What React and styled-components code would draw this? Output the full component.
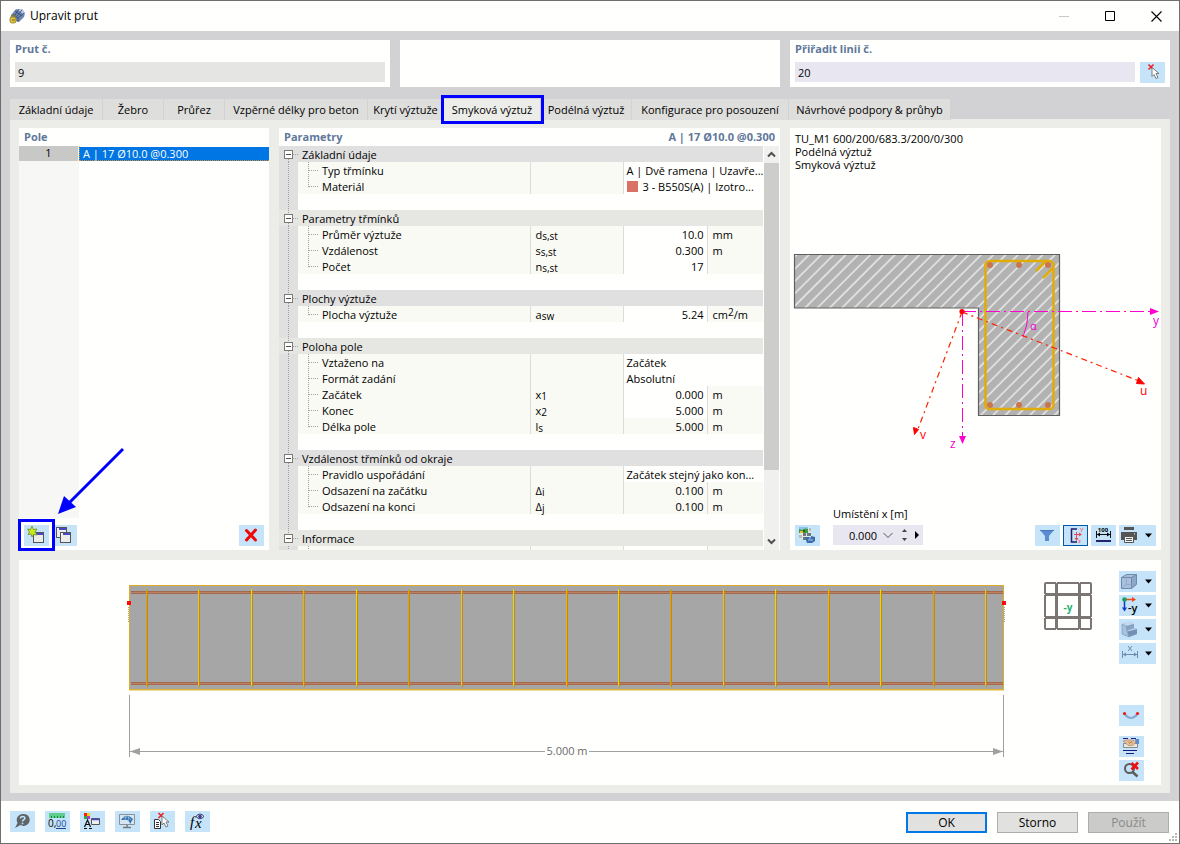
import { useState } from "react";
import styled, { createGlobalStyle } from "styled-components";

const GlobalStyle = createGlobalStyle`
  * {
    box-sizing: border-box;
  }
  body {
    margin: 0;
    background: #fffffd;
    color: #000;
    font: 11px/16px "Open Sans", "Noto Sans", sans-serif;
  }
  button, input, select {
    font: inherit;
    color: inherit;
    border: 0;
    margin: 0;
    padding: 0;
    border-radius: 0;
    background: none;
  }
  svg {
    display: block;
  }
`;

const Window = styled.div`
  display: flex;
  flex-direction: column;
  height: 100vh;
  min-height: 640px;
  border: 1px solid #6e6e6e;
  background: #fffffd;
`;

const TitleBar = styled.header`
  display: flex;
  align-items: center;
  height: 30px;
  padding: 0 0 0 8px;
  flex: none;
`;

const WindowTitle = styled.h1`
  flex: 1;
  margin: 0 0 0 5px;
  font-size: 12px;
  font-weight: 400;
`;

const CaptionButton = styled.button`
  width: 46px;
  height: 28px;
  display: grid;
  place-items: center;
  color: ${(p) => (p.disabled ? "#c8c8c4" : "#000")};
`;

const Body = styled.main`
  flex: 1;
  min-height: 0;
  display: flex;
  flex-direction: column;
  padding: 9px 9px 8px;
  background: #d2d2d4;
`;

const HeaderRow = styled.div`
  display: grid;
  grid-template-columns: repeat(3, 1fr);
  gap: 10px;
  flex: none;
`;

const HeaderBox = styled.div`
  height: 47px;
  padding: 0 5px 5px;
  background: #fffffd;
`;

const Caption = styled.label`
  display: block;
  height: 22px;
  line-height: 18px;
  font-weight: 700;
  color: #60779b;
`;

const FieldRow = styled.div`
  display: flex;
  gap: 5px;
`;

const Field = styled.input`
  flex: 1;
  min-width: 0;
  height: 20px;
  padding: 1px 3px 0;
  background: ${(p) => (p.readOnly ? "#e5e5e3" : "#e8e7f1")};
`;

const Tabs = styled.div`
  display: flex;
  flex: none;
  margin-top: 12px;
`;

const Tab = styled.button`
  position: relative;
  z-index: ${(p) => (p["aria-selected"] ? 2 : 1)};
  height: 21px;
  width: ${(p) => p.$width}px;
  padding-top: 1px;
  white-space: nowrap;
  background: ${(p) => (p["aria-selected"] ? "#ecede9" : "#dededc")};
  border-right: 1px solid #d2d2d4;
`;

const Marker = styled.span`
  position: absolute;
  z-index: 2;
  inset: ${(p) => p.$inset};
  border: 3px solid #0000ff;
  pointer-events: none;
`;

const Pane = styled.section`
  flex: 1;
  min-height: 0;
  display: grid;
  grid-template-columns: 250fr 501fr 371fr;
  grid-template-rows: minmax(0, 1fr) 225px;
  gap: 10px;
  margin-top: -1px;
  padding: 9px 9px 8px;
  background: #ecede9;
`;

const Panel = styled.section`
  display: flex;
  flex-direction: column;
  min-width: 0;
  min-height: 0;
  position: relative;
  background: #fffffd;
`;

const PanelHead = styled.h2`
  display: flex;
  justify-content: space-between;
  flex: none;
  height: 18px;
  margin: 0;
  padding: 0 5px;
  font-size: 11px;
  line-height: 18px;
  color: #60779b;
`;

const FieldList = styled.div`
  flex: 1;
  background: linear-gradient(to right, #f7f8f6 60px, #fffffd 60px);
`;

const FieldItem = styled.button`
  display: grid;
  grid-template-columns: 59px 1fr;
  gap: 1px;
  width: 100%;
  height: 15px;
  line-height: 14px;
  text-align: left;
`;

const ItemNo = styled.span`
  background: #c8c9c6;
  text-align: center;
`;

const ItemText = styled.span`
  padding-left: 3px;
  color: #fff;
  height: 15px;
  background: #0075e4;
  border: 1px dotted #e08a30;
  border-width: 0 0 1px 1px;
  border-top: 1px solid #fffffd;
`;

const ListTools = styled.div`
  display: flex;
  gap: 3px;
  padding: 7px 5px 4px;
`;

const ToolButton = styled.button`
  position: relative;
  display: flex;
  align-items: center;
  justify-content: ${(p) => (p.$menu ? "space-between" : "center")};
  flex: none;
  width: ${(p) => (p.$menu ? 37 : 25)}px;
  height: 21px;
  padding: ${(p) => (p.$menu ? "0 4px 0 1px" : "0")};
  background: #c5e3f9;
  outline: ${(p) => (p.$on ? "1px solid #0058a8" : "none")};
  outline-offset: -1px;
`;

const Spacer = styled.span`
  flex: 1;
`;

const TreeArea = styled.div`
  flex: 1;
  min-height: 0;
  display: flex;
  gap: 1px;
  padding-right: 1px;
`;

const TreeClip = styled.div`
  flex: 1;
  min-width: 0;
  overflow: hidden;
`;

const Tree = styled.table`
  width: 100%;
  table-layout: fixed;
  border-collapse: collapse;
  background: #fffffd;
  td, th {
    height: 16px;
    padding: 0;
    line-height: 14px;
    font-weight: 400;
    text-align: left;
    white-space: nowrap;
  }
`;

const Gutter = styled.td`
  background: #e0e0e0;
`;

const GroupHead = styled.th`
  background: ${(p) => (p.$light ? "#e6e7e3" : "#e0e0e0")};
`;

const Line = styled.div`
  display: flex;
  height: 16px;
  padding-top: 2px;
  svg {
    flex: none;
    margin-top: -2px;
  }
`;

const NameCell = styled.td`
  background: #f9faf4;
`;

const SymbolCell = styled.td`
  background: #f9faf4;
  border-left: 1px solid #dcdcda;
  && {
    padding: 2px 0 0 5px;
  }
  sub {
    font-size: 10px;
    line-height: 1px;
    vertical-align: -1px;
  }
`;

const ValueCell = styled.td`
  border-left: 1px solid #dcdcda;
  background: ${(p) => (p.$locked ? "#f9faf4" : "#fffffd")};
  && {
    text-align: ${(p) => (p.$text ? "left" : "right")};
    padding: ${(p) => (p.$text ? "2px 0 0 3px" : "2px 3px 0 0")};
  }
`;

const UnitCell = styled.td`
  border-left: 1px solid #dcdcda;
  background: #f9faf4;
  && {
    padding: 2px 0 0 5px;
  }
  sup {
    font-size: 10px;
    line-height: 1px;
    vertical-align: 3px;
  }
`;

const Swatch = styled.i`
  display: inline-block;
  width: 11px;
  height: 11px;
  margin-right: 5px;
  vertical-align: -1px;
  background: #d87264;
`;

const ScrollBar = styled.div`
  display: flex;
  flex-direction: column;
  width: 15px;
  background: #f0f0ee;
  button {
    height: 17px;
    display: grid;
    place-items: center;
  }
`;

const ScrollTrack = styled.div`
  flex: 1;
  &::before {
    content: "";
    display: block;
    height: 83%;
    background: #cdcdcb;
  }
`;

const SectionText = styled.p`
  margin: 0;
  padding: 4px 5px 0;
  line-height: 13px;
`;

const SectionDrawing = styled.svg`
  flex: 1;
  min-height: 0;
  width: 100%;
`;

const SectionTools = styled.div`
  display: flex;
  align-items: flex-end;
  gap: 3px;
  padding: 0 5px 4px;
`;

const Position = styled.div`
  margin-left: 10px;
  label {
    display: block;
    height: 19px;
  }
`;

const PositionBox = styled.div`
  display: flex;
  align-items: center;
  width: 90px;
  height: 20px;
  margin-bottom: 1px;
  background: #e8e7f1;
  input {
    width: 44px;
    padding-top: 1px;
    text-align: right;
  }
  button {
    height: 20px;
    display: grid;
    place-items: center;
  }
`;

const BeamPanel = styled(Panel)`
  grid-column: 1 / -1;
  flex-direction: row;
`;

const BeamDrawing = styled.svg`
  flex: 1;
  min-width: 0;
  height: 225px;
`;

const ViewTools = styled.div`
  display: flex;
  flex-direction: column;
  gap: 3px;
  padding: 11px 5px 4px 0;
`;

const ViewToolsLower = styled.div`
  display: flex;
  flex-direction: column;
  gap: 3px;
  margin-top: auto;
  button:first-child {
    margin-bottom: 7px;
  }
`;

const Footer = styled.footer`
  position: relative;
  display: flex;
  align-items: flex-start;
  flex: none;
  gap: 10px;
  height: 42px;
  padding: 10px 10px 0 9px;
`;

const DialogButton = styled.button`
  width: 81px;
  height: 21px;
  margin-top: 1px;
  font-size: 12px;
  line-height: 16px;
  color: ${(p) => (p.disabled ? "#8a8a88" : "#000")};
  background: ${(p) => (p.disabled ? "#cbcbc9" : "#e1e1df")};
  border: ${(p) => (p.$primary ? "2px solid #0078e8" : "1px solid #adadab")};
`;

const Grip = styled.svg`
  position: absolute;
  right: 2px;
  bottom: 2px;
`;

/* ---------- icons ---------- */

const MemberIcon = () => (
  <svg width="16" height="16" viewBox="0 0 16 16">
    <path d="M2 7 7 1h6l3 4-1 4-5 5-6-2z" fill="#6d86b4" />
    <path d="M7 1h6l3 4-2 1-5-4z" fill="#b6c8e2" />
    <path d="M4 6l5 4 6-5M6 3l7 5M9 10v4M10 1l-4 6M13 2L8 8" stroke="#33486f" strokeWidth=".8" fill="none" />
    <path d="M2 10V9a2 2 0 0 1 4 0v1" stroke="#8a7a20" fill="none" />
    <rect x="1" y="9" width="6" height="6" rx="2" fill="#dcc23c" stroke="#8f7c1c" strokeWidth=".8" />
    <path d="M3 12h3" stroke="#7a6a12" />
  </svg>
);

const MinimizeIcon = () => (
  <svg width="10" height="10"><path d="M0 5.5h10" stroke="currentColor" /></svg>
);
const MaximizeIcon = () => (
  <svg width="10" height="10"><path d="M.5.5h9v9h-9z" stroke="currentColor" fill="none" /></svg>
);
const CloseIcon = () => (
  <svg width="11" height="11"><path d="M.5.5l10 10M10.500.5l-10 10" stroke="currentColor" strokeWidth="1.1" /></svg>
);

const Cursor = ({ x = 0, y = 0 }) => (
  <path
    transform={`translate(${x} ${y})`}
    d="M0 0v9l2-2 2 4 2-1-2-4h3z"
    fill="#fff"
    stroke="#707070"
    strokeWidth=".9"
  />
);

const PickIcon = () => (
  <svg width="25" height="21">
    <path d="M8.500 2.500l5 5M13.500 2.500l-5 5" stroke="#f02020" strokeWidth="1.500" />
    <Cursor x={12} y={5.500} />
  </svg>
);

const MiniWindow = ({ x, y }) => (
  <g transform={`translate(${x} ${y})`}>
    <rect x=".5" y=".5" width="10" height="10" fill="#ececea" stroke="#555" />
    <path d="M3 2h7" stroke="#4a48c8" strokeWidth="2" />
    <path d="M1 2h2" stroke="#fff" />
  </g>
);

const NewIcon = () => (
  <svg width="25" height="21">
    <MiniWindow x={9} y={7} />
    <path d="M8 1l1.500 3.500L13 4l-2 3 2 3-3.500-.5L8 12l-1-3-3 .5 1.500-2.500L3.500 4l3 .5z" fill="#c6e81c" stroke="#6f8d2c" strokeWidth=".8" />
  </svg>
);

const CopyIcon = () => (
  <svg width="25" height="21">
    <MiniWindow x={4} y={2} />
    <MiniWindow x={8} y={7} />
  </svg>
);

const DeleteIcon = () => (
  <svg width="25" height="21">
    <path d="M7.500 5.500l9 9.500M16.500 5l-9 10" stroke="#f00808" strokeWidth="3" strokeLinecap="round" />
  </svg>
);

const MenuArrow = () => (
  <svg width="7" height="5"><path d="M0 .5h7L3.500 4.500z" /></svg>
);

const PictureIcon = () => (
  <svg width="25" height="21">
    <path d="M4 2h12v12H4z" fill="#dfe6e2" />
    <path d="M4 2h9v6H4z" fill="#3f9a3c" />
    <path d="M4 2h9v2l-3-.5-3 1.500-3-1z" fill="#8cc4ea" />
    <path d="M5 6h3v2H5z" fill="#e8b92c" />
    <path d="M8 5h2v2H8z" fill="#1f5c24" />
    <path d="M4 10h3v3H4zM14 3h2v3h-2z" fill="#b6bdb8" />
    <path d="M8 8h3v3H8zM12 8h4v3h-4zM8 12h3v3H8z" fill="#6c7880" />
    <path d="M10 12h6v-1l4 1v4l-3 2h-5z" fill="#3c6ca8" />
    <path d="M13 15h5M15 12v2" stroke="#a8c8ee" />
  </svg>
);

const FilterIcon = () => (
  <svg width="25" height="21">
    <path d="M5 5h14l-5 6v5h-4v-5z" fill="#5b8bd0" />
    <path d="M5 5h14v1H5z" fill="#4a78bc" />
  </svg>
);

const AxesIcon = () => (
  <svg width="25" height="21">
    <path d="M14 4H8.500v13H14" stroke="#1d1d6a" strokeWidth="1.500" fill="none" />
    <path d="M11 9.500h6M13.500 7v7" stroke="#e8485c" fill="none" />
    <path d="M16 7.500l3 2-3 2zM11.500 13h4l-2 3z" fill="#e8485c" />
    <path d="M17 3l1.500 2M20 3l-2 4M15.500 15.500h2l-2 2h2" stroke="#e8707c" strokeWidth=".8" fill="none" />
  </svg>
);

const DimensionIcon = () => (
  <svg width="25" height="21">
    <text x="12" y="7" fontSize="6" fontWeight="700" textAnchor="middle">100</text>
    <path d="M5.500 6v7M19.500 6v7M6 9.500h13" stroke="#111" />
    <path d="M6 9.500l3-2v4zM19 9.500l-3-2v4z" />
    <path d="M5 16h15" stroke="#24246c" strokeWidth="2" />
  </svg>
);

const PrintIcon = () => (
  <svg width="19" height="21">
    <path d="M4 2h10v3H4zM1 7h16v8h-3v-3H4v3H1z" fill="#555" />
    <path d="M4.500 11.500h9v6h-9z" fill="#f4f4f2" stroke="#555" />
    <path d="M6 13.500h6M6 15.500h6" stroke="#555" />
    <path d="M14 9h1" stroke="#fff" />
  </svg>
);

const CubeIcon = () => (
  <svg width="19" height="21">
    <path d="M1.500 6.500l5-3h10v10l-5 4h-10z" fill="#a9c0dc" />
    <path d="M11.500 6.500l5-3v10l-5 4z" fill="#8ea8c9" />
    <path d="M1.500 6.500l5-3h10v10l-5 4h-10zM1.500 6.500h10v11M11.500 6.500l5-3" stroke="#7188ad" fill="none" />
    <path d="M6.500 3.500v10h10M6.500 13.500l-5 4" stroke="#8ba1c2" strokeWidth=".7" fill="none" />
  </svg>
);

const ViewAxisIcon = () => (
  <svg width="19" height="21">
    <path d="M4.500 5v9" stroke="#1038c8" strokeWidth="1.500" />
    <path d="M2 12.500h5l-2.500 4z" fill="#1038c8" />
    <path d="M5 4.500h8" stroke="#f04818" strokeWidth="1.500" />
    <path d="M12 2l4 2.500L12 7z" fill="#f04818" />
    <circle cx="4.500" cy="4.500" r="2.300" fill="#18a058" />
    <text x="8" y="17" fontSize="11" fontWeight="600">-y</text>
  </svg>
);

const SolidIcon = () => (
  <svg width="19" height="21">
    <path d="M2 5l9-2 3 2v4l3 1v5l-8 3-7-3z" fill="#9fbbd8" />
    <path d="M2 5l9-2 3 2-8 2zM7 12l7-2.500 3 1-7 2.500z" fill="#c6d8ea" />
    <path d="M6 7l8-2v4l-7 2.500z" fill="#86a2c6" />
    <path d="M7.500 12.500l9.500-2.500v5l-8 3z" fill="#7590b8" />
    <path d="M2 5l4 2 1 5 2 6-7-3z" fill="#a9c2dc" stroke="#7c94b6" strokeWidth=".6" />
  </svg>
);

const SpanIcon = () => (
  <svg width="19" height="21">
    <path d="M2.500 8v7M17.500 8v7M3 11.500h14M8 3l4 5M12 3l-4 5" stroke="#7288ae" fill="none" />
    <path d="M3 11.500l3-2v4zM17 11.500l-3-2v4z" fill="#7288ae" />
  </svg>
);

const DeflectionIcon = () => (
  <svg width="25" height="21">
    <path d="M5.500 9q6.500 8 13 0" stroke="#88a8d0" strokeWidth="2" fill="none" />
    <circle cx="5.500" cy="8.500" r="1.600" fill="#f01818" />
    <circle cx="18.500" cy="8.500" r="1.600" fill="#f01818" />
  </svg>
);

const ReportIcon = () => (
  <svg width="25" height="21">
    <path d="M4 2.500h5M12 2.500h5M4 14.500h14M7 17.500h8" stroke="#1c1c80" strokeWidth="1.200" />
    <path d="M4.500 7.500h14v4h-14z" fill="#e8e8e4" stroke="#8a8a88" />
    <path d="M4 5l4-1h6l3 2-3 3.500H9l-2-2z" fill="#e8bd96" stroke="#a97c5a" strokeWidth=".6" />
    <path d="M9 6l5 1M10 8l3-3" stroke="#a97c5a" strokeWidth=".6" />
    <path d="M16 3h4v5h-3z" fill="#5c8cd0" />
  </svg>
);

const ClearZoomIcon = () => (
  <svg width="25" height="21">
    <circle cx="10.500" cy="8.500" r="4.500" fill="none" stroke="#5c5c5c" strokeWidth="2" />
    <path d="M13.500 12l5 4.500" stroke="#5c5c5c" strokeWidth="2.500" />
    <path d="M12.500 3l6.500 6M19 2.500l-6.500 7" stroke="#f01010" strokeWidth="2.600" />
  </svg>
);

const HelpIcon = () => (
  <svg width="25" height="21">
    <path d="M12.500 3a6 6 0 1 1-2 11L5 17l2.500-5A6 6 0 0 1 12.500 3z" fill="#5f6468" />
    <path d="M10.500 7.500q0-2 2.200-2t2.200 1.800q0 1-1.200 1.500t-1.200 1.700" stroke="#c5e3f9" strokeWidth="1.500" fill="none" />
    <path d="M11.700 11.700h1.600v1.600h-1.600z" fill="#c5e3f9" />
  </svg>
);

const UnitsIcon = () => (
  <svg width="25" height="21">
    <path d="M4 2h16v5H4z" fill="#5fcf8c" />
    <path d="M6.500 5v2M9.500 5v2M12.500 5v2M15.500 5v2M18.500 5v2" stroke="#1c8048" />
    <text x="3" y="16" fontSize="10">0,</text>
    <text x="11" y="16" fontSize="9" fill="#1d3f94">00</text>
    <path d="M11 17.500h10" stroke="#1d3f94" />
  </svg>
);

const LegendIcon = () => (
  <svg width="25" height="21">
    <path d="M4 2h3v3H4z" fill="#f02020" />
    <path d="M7 2h3v3H7z" fill="#f0d010" />
    <path d="M4 5h3v3H4z" fill="#20b040" />
    <path d="M7 5h3v3H7z" fill="#c030d0" />
    <path d="M4.500 16l3-7 3 7M5.500 13.500h4M4 17.500h3M9 17.500h3" stroke="#111" strokeWidth="1.200" fill="none" />
    <path d="M11.500 7.500h8v6h-8z" fill="#eee" stroke="#555" />
    <path d="M12 8.500h7" stroke="#4a48c8" strokeWidth="1.500" />
  </svg>
);

const DisplayIcon = () => (
  <svg width="25" height="21">
    <path d="M4.500 3.500h15v10h-15z" fill="#d4e6f4" stroke="#8a9098" />
    <path d="M12 14v2.500M8 16.500h8" stroke="#777" strokeWidth="1.500" />
    <path d="M6 9q5-8 12-1l-3 5q-1-5-6-4z" fill="#3a70ac" />
    <path d="M8 7q5-3 8 2M11 5l-1 4M14 5l-1 5" stroke="#9cc4e8" strokeWidth=".7" fill="none" />
  </svg>
);

const ReportPickIcon = () => (
  <svg width="25" height="21">
    <path d="M8.500 2l5 5M13.500 2l-5 5" stroke="#f02020" strokeWidth="1.500" />
    <path d="M4.500 8.500h4l2 2v7h-6z" fill="#fff" stroke="#333" />
    <path d="M6 11.500h3M6 13.500h3M6 15.500h3" stroke="#333" />
    <Cursor x={12} y={5} />
  </svg>
);

const FormulaIcon = () => (
  <svg width="25" height="21">
    <text x="5" y="16" fontSize="15" fontStyle="italic" fontFamily="Liberation Serif, serif">f</text>
    <text x="10" y="17" fontSize="15" fontStyle="italic" fontFamily="Liberation Serif, serif">x</text>
    <path d="M11 5.500q4-5 8 0-4 4.500-8 0z" fill="#dfe4f4" stroke="#3c3c78" />
    <circle cx="15" cy="5.500" r="1.800" fill="#3c3c88" />
  </svg>
);

const Chevron = ({ up }) => (
  <svg width="9" height="7">
    <path d={up ? "M1 5.500l3.500-3.500L8 5.500" : "M1 1.500L4.500 5 8 1.500"} stroke="#505050" strokeWidth="2" fill="none" />
  </svg>
);

/* ---------- parameter tree ---------- */

const groups = [
  {
    name: "Základní údaje",
    rows: [
      { name: "Typ třmínku", text: "A | Dvě ramena | Uzavře..." },
      { name: "Materiál", text: "3 - B550S(A) | Izotro...", swatch: true },
    ],
  },
  {
    name: "Parametry třmínků",
    rows: [
      { name: "Průměr výztuže", symbol: ["d", "s,st"], value: "10.0", unit: "mm" },
      { name: "Vzdálenost", symbol: ["s", "s,st"], value: "0.300", unit: "m" },
      { name: "Počet", symbol: ["n", "s,st"], value: "17", unit: "" },
    ],
  },
  {
    name: "Plochy výztuže",
    rows: [
      { name: "Plocha výztuže", symbol: ["a", "sw"], value: "5.24", unit: <>cm<sup>2</sup>/m</> },
    ],
  },
  {
    name: "Poloha pole",
    rows: [
      { name: "Vztaženo na", text: "Začátek" },
      { name: "Formát zadání", text: "Absolutní" },
      { name: "Začátek", symbol: ["x", "1"], value: "0.000", unit: "m" },
      { name: "Konec", symbol: ["x", "2"], value: "5.000", unit: "m" },
      { name: "Délka pole", symbol: ["l", "s"], value: "5.000", unit: "m", locked: true },
    ],
  },
  {
    name: "Vzdálenost třmínků od okraje",
    rows: [
      { name: "Pravidlo uspořádání", text: "Začátek stejný jako kon..." },
      { name: "Odsazení na začátku", symbol: ["Δ", "i"], value: "0.100", unit: "m", locked: true },
      { name: "Odsazení na konci", symbol: ["Δ", "j"], value: "0.100", unit: "m", locked: true },
    ],
  },
  { name: "Informace", rows: [{ name: "", value: "", unit: "" }] },
];

const dots = { stroke: "#a0a09e", strokeDasharray: "1 1", fill: "none" };

const GutterLine = () => (
  <svg width="19" height="16"><path d="M9.500 0v16" {...dots} /></svg>
);

const ExpandGlyph = ({ first, last }) => (
  <svg width="23" height="16">
    {!first && <path d="M9.500 0v4" {...dots} />}
    {!last && <path d="M9.500 13v3" {...dots} />}
    <path d="M14 8.500h6" {...dots} />
    <rect x="5.500" y="4.500" width="8" height="8" fill="#fffffd" stroke="#7a7a78" />
    <path d="M7 8.500h5" stroke="#505050" />
  </svg>
);

const Branch = ({ last }) => (
  <svg width="24" height="16">
    <path d={last ? "M10.500 0v9" : "M10.500 0v16"} {...dots} />
    <path d="M11 8.500h10" {...dots} />
  </svg>
);

const ParamRow = ({ row, last }) => (
  <tr>
    <Gutter><GutterLine /></Gutter>
    <NameCell>
      <Line><Branch last={last} />{row.name}</Line>
    </NameCell>
    <SymbolCell>
      {row.symbol && <>{row.symbol[0]}<sub>{row.symbol[1]}</sub></>}
    </SymbolCell>
    <ValueCell $text={row.text} $locked={row.locked} colSpan={row.text ? 2 : 1}>
      {row.swatch && <Swatch />}
      {row.text || row.value}
    </ValueCell>
    {!row.text && <UnitCell>{row.unit}</UnitCell>}
  </tr>
);

const ParamTree = () => (
  <Tree>
    <colgroup>
      <col width="19" />
      <col />
      <col width="93" />
      <col width="84" />
      <col width="56" />
    </colgroup>
    {groups.map((g, i) => (
      <tbody key={g.name}>
        <tr>
          <GroupHead colSpan={5} $light={i % 2 === 1}>
            <Line>
              <ExpandGlyph first={i === 0} last={i === groups.length - 1} />
              {g.name}
            </Line>
          </GroupHead>
        </tr>
        {g.rows.map((r, j) => (
          <ParamRow key={r.name} row={r} last={j === g.rows.length - 1} />
        ))}
        <tr>
          <Gutter><GutterLine /></Gutter>
          <td colSpan={4} />
        </tr>
      </tbody>
    ))}
  </Tree>
);

/* ---------- drawings ---------- */

const CrossSection = () => (
  <SectionDrawing viewBox="790 171 371 335" role="img" aria-label="Průřez">
    <defs>
      <pattern id="hatch" width="8.700" height="8.700" patternUnits="userSpaceOnUse" patternTransform="rotate(45 795 254)">
        <rect width="8.700" height="8.700" fill="#b2b2b2" />
        <path d="M5 0v8.700" stroke="#fff" strokeWidth="1.100" />
      </pattern>
    </defs>
    <path d="M794.500 254.500h265v161h-81v-107.500h-184z" fill="url(#hatch)" stroke="#606060" strokeWidth="1.200" />
    <rect x="985.500" y="261" width="68" height="148" rx="4" fill="none" stroke="#e0ac08" strokeWidth="2.600" />
    <path d="M1046 261l-10 10M1053 268l-10 10" stroke="#e0ac08" strokeWidth="2.600" />
    {[990, 1019, 1048].map((x) => (
      <g key={x} fill="#cb754c">
        <circle cx={x} cy="265" r="3" />
        <circle cx={x} cy="405" r="3" />
      </g>
    ))}
    <g stroke="#ff00d0" fill="none" strokeDasharray="14 4 2 4">
      <path d="M962 311.500h189M962.500 312v125" />
    </g>
    <path d="M1028 312q0 13-5 25" stroke="#ff00d0" fill="none" />
    <g stroke="#ff2000" fill="none" strokeWidth="1.200" strokeDasharray="6 4 2 4">
      <path d="M962 312l177 69" />
      <path d="M962 312l-44 117" />
    </g>
    <path d="M1150 308l9 3.500-9 3.500zM959 436h7l-3.500 8z" fill="#ff00d0" />
    <path d="M1138.500 377.500l6 6.500-8-.5zM913.500 427.500l5 2-4 5z" fill="#ff0000" stroke="#ff0000" />
    <circle cx="962" cy="311.500" r="2.600" fill="#ff0000" />
    <g fontSize="12" fill="#f000d0">
      <text x="1153" y="325">y</text>
      <text x="950" y="448">z</text>
      <text x="1030" y="330" fontSize="11">α</text>
    </g>
    <g fontSize="12" fill="#ff0000">
      <text x="1140" y="395">u</text>
      <text x="920" y="439">v</text>
    </g>
  </SectionDrawing>
);

const stirrups = Array.from({ length: 17 }, (_, i) => Math.round(146 + i * 52.440));
const stirrupColors = ["#d8a018", "#ecc028", "#e8d808", "#f0b000", "#e8d808"];

const NavCube = () => (
  <g fill="none" stroke="#7b7674">
    <rect x="1045" y="583" width="46" height="46" rx="1" strokeWidth="2" />
    <path d="M1056.500 583v46M1079.500 583v46M1045 594.500h46M1045 617.500h46" strokeWidth="3" />
    <path
      d="M1056.500 581v2M1079.500 581v2M1056.500 629v2M1079.500 629v2M1043 594.500h2M1043 617.500h2M1091 594.500h2M1091 617.500h2"
      stroke="#fffffd"
    />
    <text x="1068" y="611" fontSize="10" fontWeight="700" textAnchor="middle" fill="#28b070" stroke="none">-y</text>
  </g>
);

const Beam = () => (
  <BeamDrawing viewBox="19 560 1100 225" role="img" aria-label="Pohled na prut">
    <rect x="129.500" y="585.500" width="874" height="104" fill="#a6a6a6" stroke="#dcae28" />
    <path d="M129 690h875" stroke="#e4b83c" />
    <g stroke="#a3694f" strokeWidth="3">
      <path d="M131 592.500h872M131 683.500h872" />
    </g>
    <g stroke="#be8062">
      <path d="M131 592.500h872M131 683.500h872" />
    </g>
    {stirrups.map((x, i) => (
      <g key={x}>
        <path d={`M${x + 1}.5 590v97`} stroke="#c08a14" />
        <path d={`M${x}.5 589v97`} stroke={stirrupColors[i % 5]} />
      </g>
    ))}
    <path d="M127 601h4v4h-4zM1002 601h4v4h-4z" fill="#ff0808" />
    <path d="M128.500 607v16M1004.500 607v16" stroke="#a0a0a0" strokeDasharray="1 1" />
    <path d="M129.500 695v62M1003.500 695v62M130 751.500h415M589 751.500h414" stroke="#a0a0a2" />
    <path d="M130 751.500l10-3.500v7zM1003 751.500l-10-3.500v7z" fill="#a0a0a2" />
    <text x="567" y="755" fontSize="11" textAnchor="middle" fill="#6c6c6c">5.000 m</text>
    <NavCube />
  </BeamDrawing>
);

const CalloutArrow = styled.svg`
  position: absolute;
  left: 36px;
  bottom: 33px;
  pointer-events: none;
`;

const tabs = [
  { name: "Základní údaje", width: 93 },
  { name: "Žebro", width: 61 },
  { name: "Průřez", width: 61 },
  { name: "Vzpěrné délky pro beton", width: 143 },
  { name: "Krytí výztuže", width: 76 },
  { name: "Smyková výztuž", width: 97, marked: true },
  { name: "Podélná výztuž", width: 91 },
  { name: "Konfigurace pro posouzení", width: 157 },
  { name: "Návrhové podpory & průhyb", width: 162 },
];

export default function App() {
  const [tab, setTab] = useState("Smyková výztuž");

  return (
    <>
      <GlobalStyle />
      <Window>
        <TitleBar>
          <MemberIcon />
          <WindowTitle>Upravit prut</WindowTitle>
          <CaptionButton disabled aria-label="Minimalizovat"><MinimizeIcon /></CaptionButton>
          <CaptionButton aria-label="Maximalizovat"><MaximizeIcon /></CaptionButton>
          <CaptionButton aria-label="Zavřít"><CloseIcon /></CaptionButton>
        </TitleBar>

        <Body>
          <HeaderRow>
            <HeaderBox>
              <Caption htmlFor="member">Prut č.</Caption>
              <FieldRow>
                <Field id="member" readOnly value="9" />
              </FieldRow>
            </HeaderBox>
            <HeaderBox />
            <HeaderBox>
              <Caption htmlFor="line">Přiřadit linii č.</Caption>
              <FieldRow>
                <Field id="line" defaultValue="20" />
                <ToolButton aria-label="Vybrat linii"><PickIcon /></ToolButton>
              </FieldRow>
            </HeaderBox>
          </HeaderRow>

          <Tabs role="tablist">
            {tabs.map((t) => (
              <Tab
                key={t.name}
                role="tab"
                $width={t.width}
                aria-selected={t.name === tab}
                onClick={() => setTab(t.name)}
              >
                {t.name}
                {t.marked && <Marker $inset="-4px -4px -4px -3px" />}
              </Tab>
            ))}
          </Tabs>

          <Pane>
            <Panel>
              <PanelHead>Pole</PanelHead>
              <FieldList>
                <FieldItem>
                  <ItemNo>1</ItemNo>
                  <ItemText>A | 17 Ø10.0 @0.300</ItemText>
                </FieldItem>
              </FieldList>
              <ListTools>
                <ToolButton aria-label="Nové pole">
                  <NewIcon />
                  <Marker $inset="-6px -6px -5px -6px" />
                </ToolButton>
                <ToolButton aria-label="Kopírovat pole"><CopyIcon /></ToolButton>
                <Spacer />
                <ToolButton aria-label="Smazat pole"><DeleteIcon /></ToolButton>
              </ListTools>
              <CalloutArrow width="72" height="72">
                <path d="M68 4L14 58" stroke="#0000ff" strokeWidth="3" />
                <path d="M3 69l6-18 12 11z" fill="#0000ff" />
              </CalloutArrow>
            </Panel>

            <Panel>
              <PanelHead>
                <span>Parametry</span>
                <span>A | 17 Ø10.0 @0.300</span>
              </PanelHead>
              <TreeArea>
                <TreeClip><ParamTree /></TreeClip>
                <ScrollBar>
                  <button aria-label="Nahoru"><Chevron up /></button>
                  <ScrollTrack />
                  <button aria-label="Dolů"><Chevron /></button>
                </ScrollBar>
              </TreeArea>
            </Panel>

            <Panel>
              <SectionText>
                TU_M1 600/200/683.3/200/0/300<br />
                Podélná výztuž<br />
                Smyková výztuž
              </SectionText>
              <CrossSection />
              <SectionTools>
                <ToolButton aria-label="Obrázek"><PictureIcon /></ToolButton>
                <Position>
                  <label htmlFor="position">Umístění x [m]</label>
                  <PositionBox>
                    <input id="position" defaultValue="0.000" />
                    <button aria-label="Seznam">
                      <svg width="23" height="20"><path d="M6.500 8l4.500 4.500L15.500 8" stroke="#555" fill="none" /></svg>
                    </button>
                    <button aria-label="Krok">
                      <svg width="10" height="20"><path d="M2 7l2.500-3L7 7zM2 13l2.500 3L7 13z" fill="#444" /></svg>
                    </button>
                    <button aria-label="Další">
                      <svg width="12" height="20"><path d="M5 6v8l4-4z" /></svg>
                    </button>
                  </PositionBox>
                </Position>
                <Spacer />
                <ToolButton aria-label="Filtr"><FilterIcon /></ToolButton>
                <ToolButton $on aria-label="Osy"><AxesIcon /></ToolButton>
                <ToolButton aria-label="Kóty"><DimensionIcon /></ToolButton>
                <ToolButton $menu aria-label="Tisk"><PrintIcon /><MenuArrow /></ToolButton>
              </SectionTools>
            </Panel>

            <BeamPanel>
              <Beam />
              <ViewTools>
                <ToolButton $menu aria-label="Zobrazení"><CubeIcon /><MenuArrow /></ToolButton>
                <ToolButton $menu aria-label="Směr pohledu"><ViewAxisIcon /><MenuArrow /></ToolButton>
                <ToolButton $menu aria-label="Tělesa"><SolidIcon /><MenuArrow /></ToolButton>
                <ToolButton $menu aria-label="Rozměry"><SpanIcon /><MenuArrow /></ToolButton>
                <ViewToolsLower>
                  <ToolButton aria-label="Průhyb"><DeflectionIcon /></ToolButton>
                  <ToolButton aria-label="Protokol"><ReportIcon /></ToolButton>
                  <ToolButton aria-label="Zrušit zvětšení"><ClearZoomIcon /></ToolButton>
                </ViewToolsLower>
              </ViewTools>
            </BeamPanel>
          </Pane>
        </Body>

        <Footer>
          <ToolButton aria-label="Nápověda"><HelpIcon /></ToolButton>
          <ToolButton aria-label="Jednotky"><UnitsIcon /></ToolButton>
          <ToolButton aria-label="Legenda"><LegendIcon /></ToolButton>
          <ToolButton aria-label="Vykreslení"><DisplayIcon /></ToolButton>
          <ToolButton aria-label="Vybrat v protokolu"><ReportPickIcon /></ToolButton>
          <ToolButton aria-label="Vzorce"><FormulaIcon /></ToolButton>
          <Spacer />
          <DialogButton $primary>OK</DialogButton>
          <DialogButton>Storno</DialogButton>
          <DialogButton disabled>Použít</DialogButton>
          <Grip width="8" height="8">
            <path d="M6 0h2v2H6zM3 3h2v2H3zM6 3h2v2H6zM0 6h2v2H0zM3 6h2v2H3zM6 6h2v2H6z" fill="#b8b8b6" />
          </Grip>
        </Footer>
      </Window>
    </>
  );
}
